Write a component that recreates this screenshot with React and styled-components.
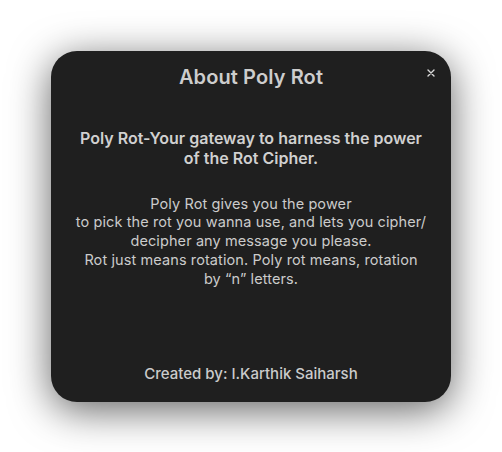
import React from "react";
import styled, { createGlobalStyle } from "styled-components";

const Global = createGlobalStyle`
  html, body { margin: 0; padding: 0; background: #ffffff; }
  body { font-family: "Inter", "Open Sans", sans-serif; }
`;

const Page = styled.div`
  width: 502px;
  height: 452px;
  display: flex;
  align-items: center;
  justify-content: center;
`;

const Card = styled.div`
  position: relative;
  box-sizing: border-box;
  width: 400px;
  height: 351px;
  background: #1f1f1f;
  border-radius: 26px;
  box-shadow: 0 8px 40px rgba(0, 0, 0, 0.62);
  display: flex;
  flex-direction: column;
  align-items: center;
  padding: 14px 20px 18px;
  color: #cfcfcf;
  text-align: center;
`;

const Title = styled.h1`
  margin: 0;
  font-size: 20px;
  line-height: 24px;
  font-weight: 600;
  letter-spacing: 0.1px;
  color: #cdcdcd;
`;

const Close = styled.button`
  position: absolute;
  right: 14px;
  top: 16px;
  background: none;
  border: none;
  padding: 0;
  width: 12px;
  height: 12px;
  color: #d8d8d8;
  cursor: pointer;
  display: flex;
  align-items: center;
  justify-content: center;
`;

const Heading = styled.p`
  margin: 39px 0 0;
  font-size: 16px;
  line-height: 20px;
  font-weight: 600;
  letter-spacing: 0;
  color: #d0d0d0;
`;

const Body = styled.p`
  margin: 27px 0 0;
  font-size: 14.5px;
  line-height: 18.75px;
  font-weight: 400;
  letter-spacing: 0.1px;
  color: #cbcbcb;
`;

const Footer = styled.p`
  margin: auto 0 0;
  font-size: 15px;
  line-height: 20px;
  font-weight: 500;
  letter-spacing: 0;
  color: #cbcbcb;
`;

export default function App() {
  return (
    <>
      <Global />
      <Page>
        <Card>
          <Title>About Poly Rot</Title>
          <Close aria-label="Close">
            <svg width="8" height="8" viewBox="0 0 8 8">
              <path d="M1 1L7 7M7 1L1 7" stroke="currentColor" strokeWidth="1.4" strokeLinecap="round" />
            </svg>
          </Close>
          <Heading>
            Poly Rot-Your gateway to harness the power
            <br />
            of the Rot Cipher.
          </Heading>
          <Body>
            Poly Rot gives you the power
            <br />
            to pick the rot you wanna use, and lets you cipher/
            <br />
            decipher any message you please.
            <br />
            Rot just means rotation. Poly rot means, rotation
            <br />
            by “n” letters.
          </Body>
          <Footer>Created by: I.Karthik Saiharsh</Footer>
        </Card>
      </Page>
    </>
  );
}
